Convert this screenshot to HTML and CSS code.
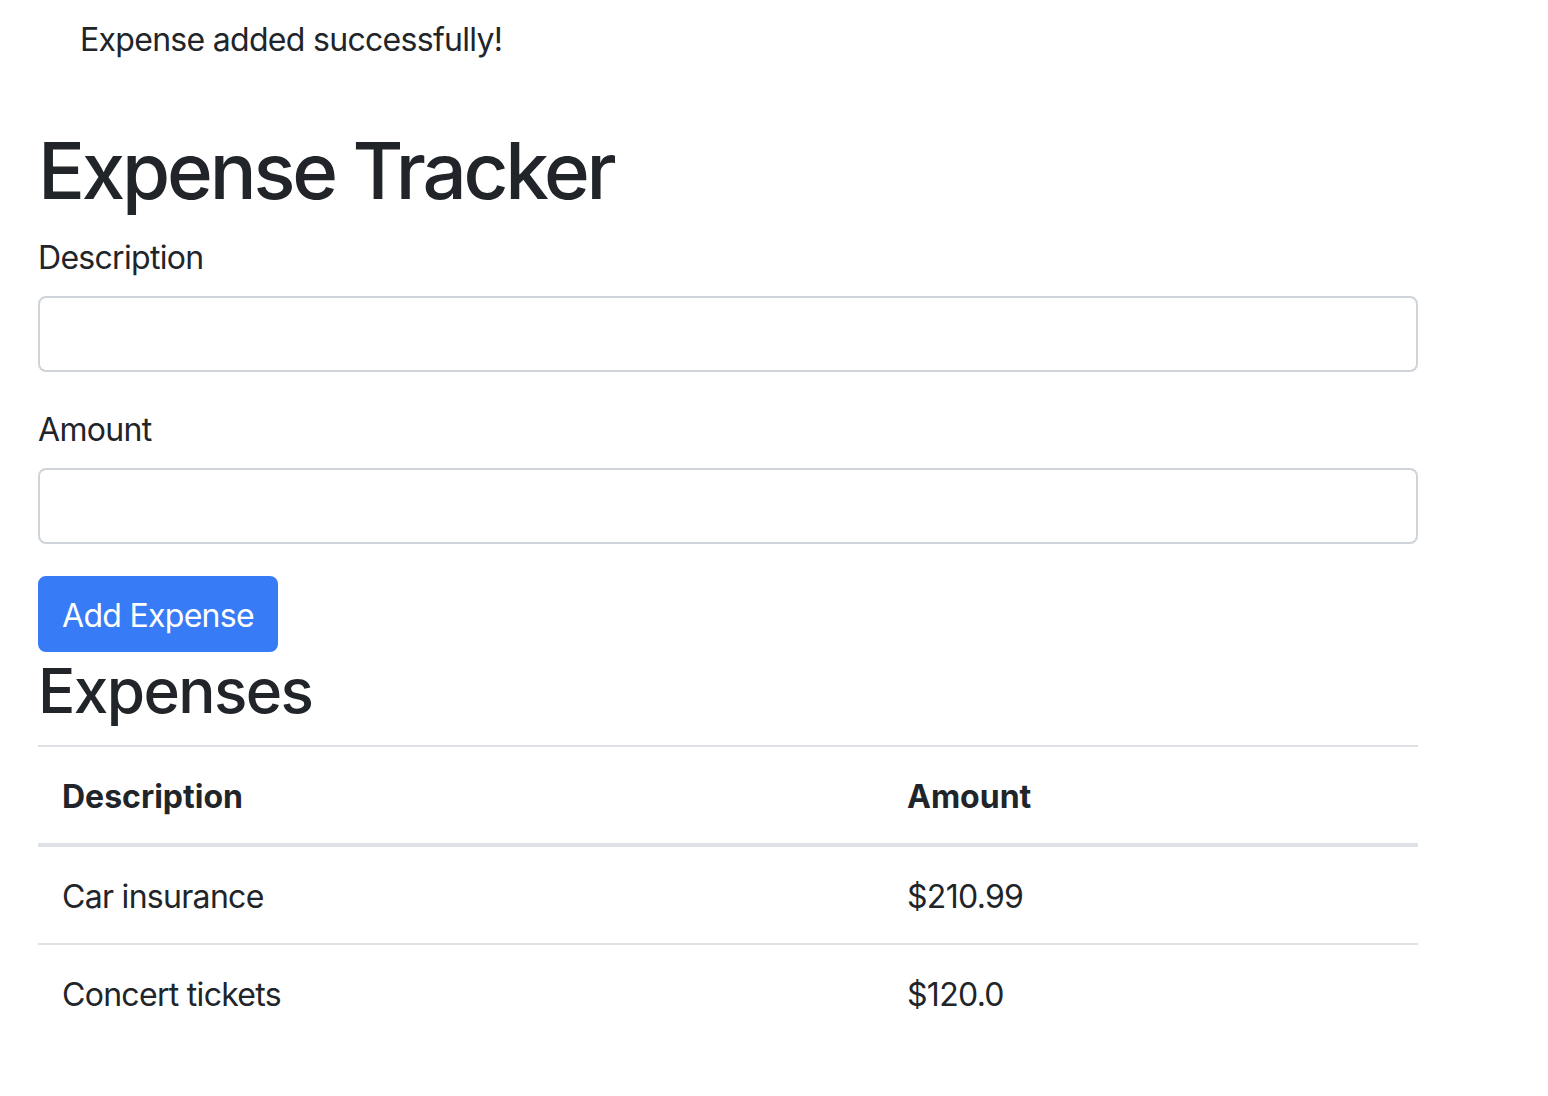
FILE: index.html
```html
<!DOCTYPE html>
<html lang="en">
<head>
<meta charset="utf-8">
<title>Expense Tracker</title>
<link rel="stylesheet" href="styles.css">
</head>
<body>
<ul class="flashes">
  <li>Expense added successfully!</li>
</ul>
<div class="container">
  <h1 class="title">Expense Tracker</h1>
  <form class="expense-form">
    <div class="form-group">
      <label class="form-label" for="description">Description</label>
      <input class="form-control" type="text" id="description">
    </div>
    <div class="form-group">
      <label class="form-label" for="amount">Amount</label>
      <input class="form-control" type="text" id="amount">
    </div>
    <button class="btn-primary" type="button">Add Expense</button>
  </form>
  <h2 class="subtitle">Expenses</h2>
  <table class="table">
    <thead>
      <tr><th class="col-desc">Description</th><th>Amount</th></tr>
    </thead>
    <tbody>
      <tr><td>Car insurance</td><td>$210.99</td></tr>
      <tr><td>Concert tickets</td><td>$120.0</td></tr>
    </tbody>
  </table>
</div>
</body>
</html>
```

FILE: styles.css
```css
* { box-sizing: border-box; }
html, body { margin: 0; padding: 0; background: #fff; }
body {
  font-family: Inter, "Noto Sans", Roboto, sans-serif;
  font-size: 32px;
  line-height: 48px;
  letter-spacing: -0.7px;
  color: #212529;
}
.flashes {
  list-style: none;
  margin: 0;
  padding: 16px 0 0 80px;
}
.container {
  width: 1380px;
  margin-left: 38px;
}
.title {
  font-size: 78px;
  font-weight: 500;
  line-height: 96px;
  margin: 59px 0 13px;
  letter-spacing: -3.2px;
}
.form-group { margin-bottom: 32px; }
.form-label {
  display: block;
  padding-top: 2px;
  margin-bottom: 14px;
}
.form-control {
  display: block;
  width: 100%;
  height: 76px;
  border: 2px solid #ced4da;
  border-radius: 8px;
  padding: 12px 24px;
  font: inherit;
  background: #fff;
}
.btn-primary {
  display: block;
  height: 76px;
  padding: 4px 22px 0;
  border: 2px solid #377cf6;
  background: #377cf6;
  color: #fff;
  font: inherit;
  letter-spacing: -0.7px;
  border-radius: 8px;
}
.subtitle {
  font-size: 62px;
  font-weight: 500;
  line-height: 77px;
  margin: 0 0 16px;
  letter-spacing: -1.6px;
}
.table {
  width: 100%;
  border-collapse: collapse;
}
.table th, .table td {
  text-align: left;
  padding: 26px 24px 22px;
  border-top: 2px solid #dee2e6;
  vertical-align: top;
}
.table th { font-weight: 700; letter-spacing: 0; }
.table thead th { border-bottom: 4px solid #dee2e6; }
.col-desc { width: 845px; }
```
